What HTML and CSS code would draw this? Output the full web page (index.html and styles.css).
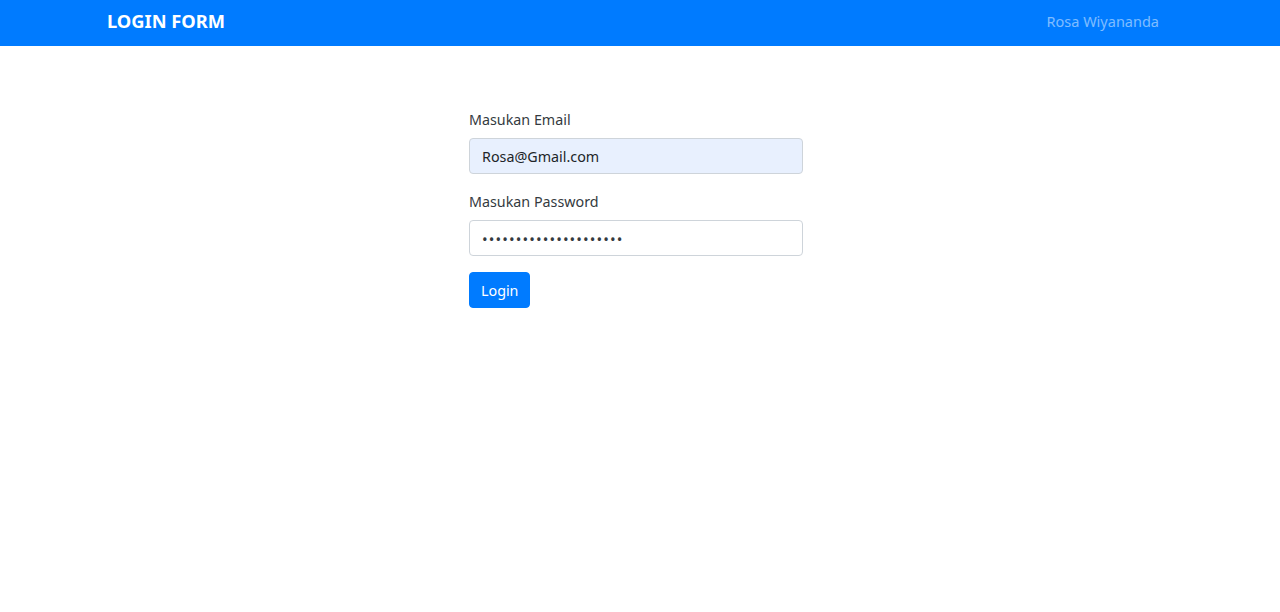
FILE: index.html
```html
<!DOCTYPE html>
<html lang="en">
<head>
    <meta charset="UTF-8">
    <meta name="viewport" content="width=device-width, initial-scale=1.0">
    <title>Login Form</title>
    <link rel="stylesheet" href="styles.css">
</head>
<body>
    <nav class="navbar">
        <div class="container nav-inner">
            <a class="brand" href="#">LOGIN FORM</a>
            <a class="nav-user" href="#">Rosa Wiyananda</a>
        </div>
    </nav>

    <div class="container">
        <form class="login-form" onsubmit="return false">
            <div class="form-group">
                <label for="email">Masukan Email</label>
                <input type="email" id="email" class="form-control autofilled" value="Rosa@Gmail.com">
            </div>
            <div class="form-group">
                <label for="password">Masukan Password</label>
                <input type="password" id="password" class="form-control password" value="rosawiyananda12345678">
            </div>
            <button type="submit" class="btn">Login</button>
        </form>
    </div>
</body>
</html>
```

FILE: styles.css
```css
* {
    box-sizing: border-box;
}
body {
    margin: 0;
    font-family: "Noto Sans", "Open Sans", sans-serif;
    font-size: 14.3px;
    color: #343a40;
    background-color: #fff;
}
.container {
    max-width: 1140px;
    margin: 0 auto;
}
.navbar {
    background-color: #007bff;
    height: 46px;
}
.nav-inner {
    height: 100%;
    display: flex;
    align-items: center;
    justify-content: space-between;
    padding: 0 51px 5px 37px;
}
.brand {
    color: #fff;
    font-weight: bold;
    font-size: 18.3px;
    text-decoration: none;
}
.nav-user {
    color: rgba(255, 255, 255, 0.5);
    font-size: 14.5px;
    text-decoration: none;
}
.login-form {
    width: 334px;
    margin: 62px 0 0 399px;
}
.form-group {
    display: flex;
    flex-direction: column;
    margin-bottom: 16px;
}
.form-group label {
    line-height: 24px;
    margin-bottom: 6px;
}
.form-control {
    height: 36px;
    padding: 1px 12px 0;
    font-family: inherit;
    font-size: 14.3px;
    color: #212529;
    border: 1px solid #ced4da;
    border-radius: 4px;
    background-color: #fff;
}
.form-control.autofilled {
    background-color: #e8f0fe;
}
.form-control.password {
    color: #343a40;
    font-size: 15px;
    letter-spacing: 1.1px;
}
.btn {
    align-self: flex-start;
    height: 36px;
    padding: 0 11px;
    font-family: inherit;
    font-size: 14.3px;
    color: #fff;
    background-color: #007bff;
    border: 1px solid #007bff;
    border-radius: 4px;
}
```
